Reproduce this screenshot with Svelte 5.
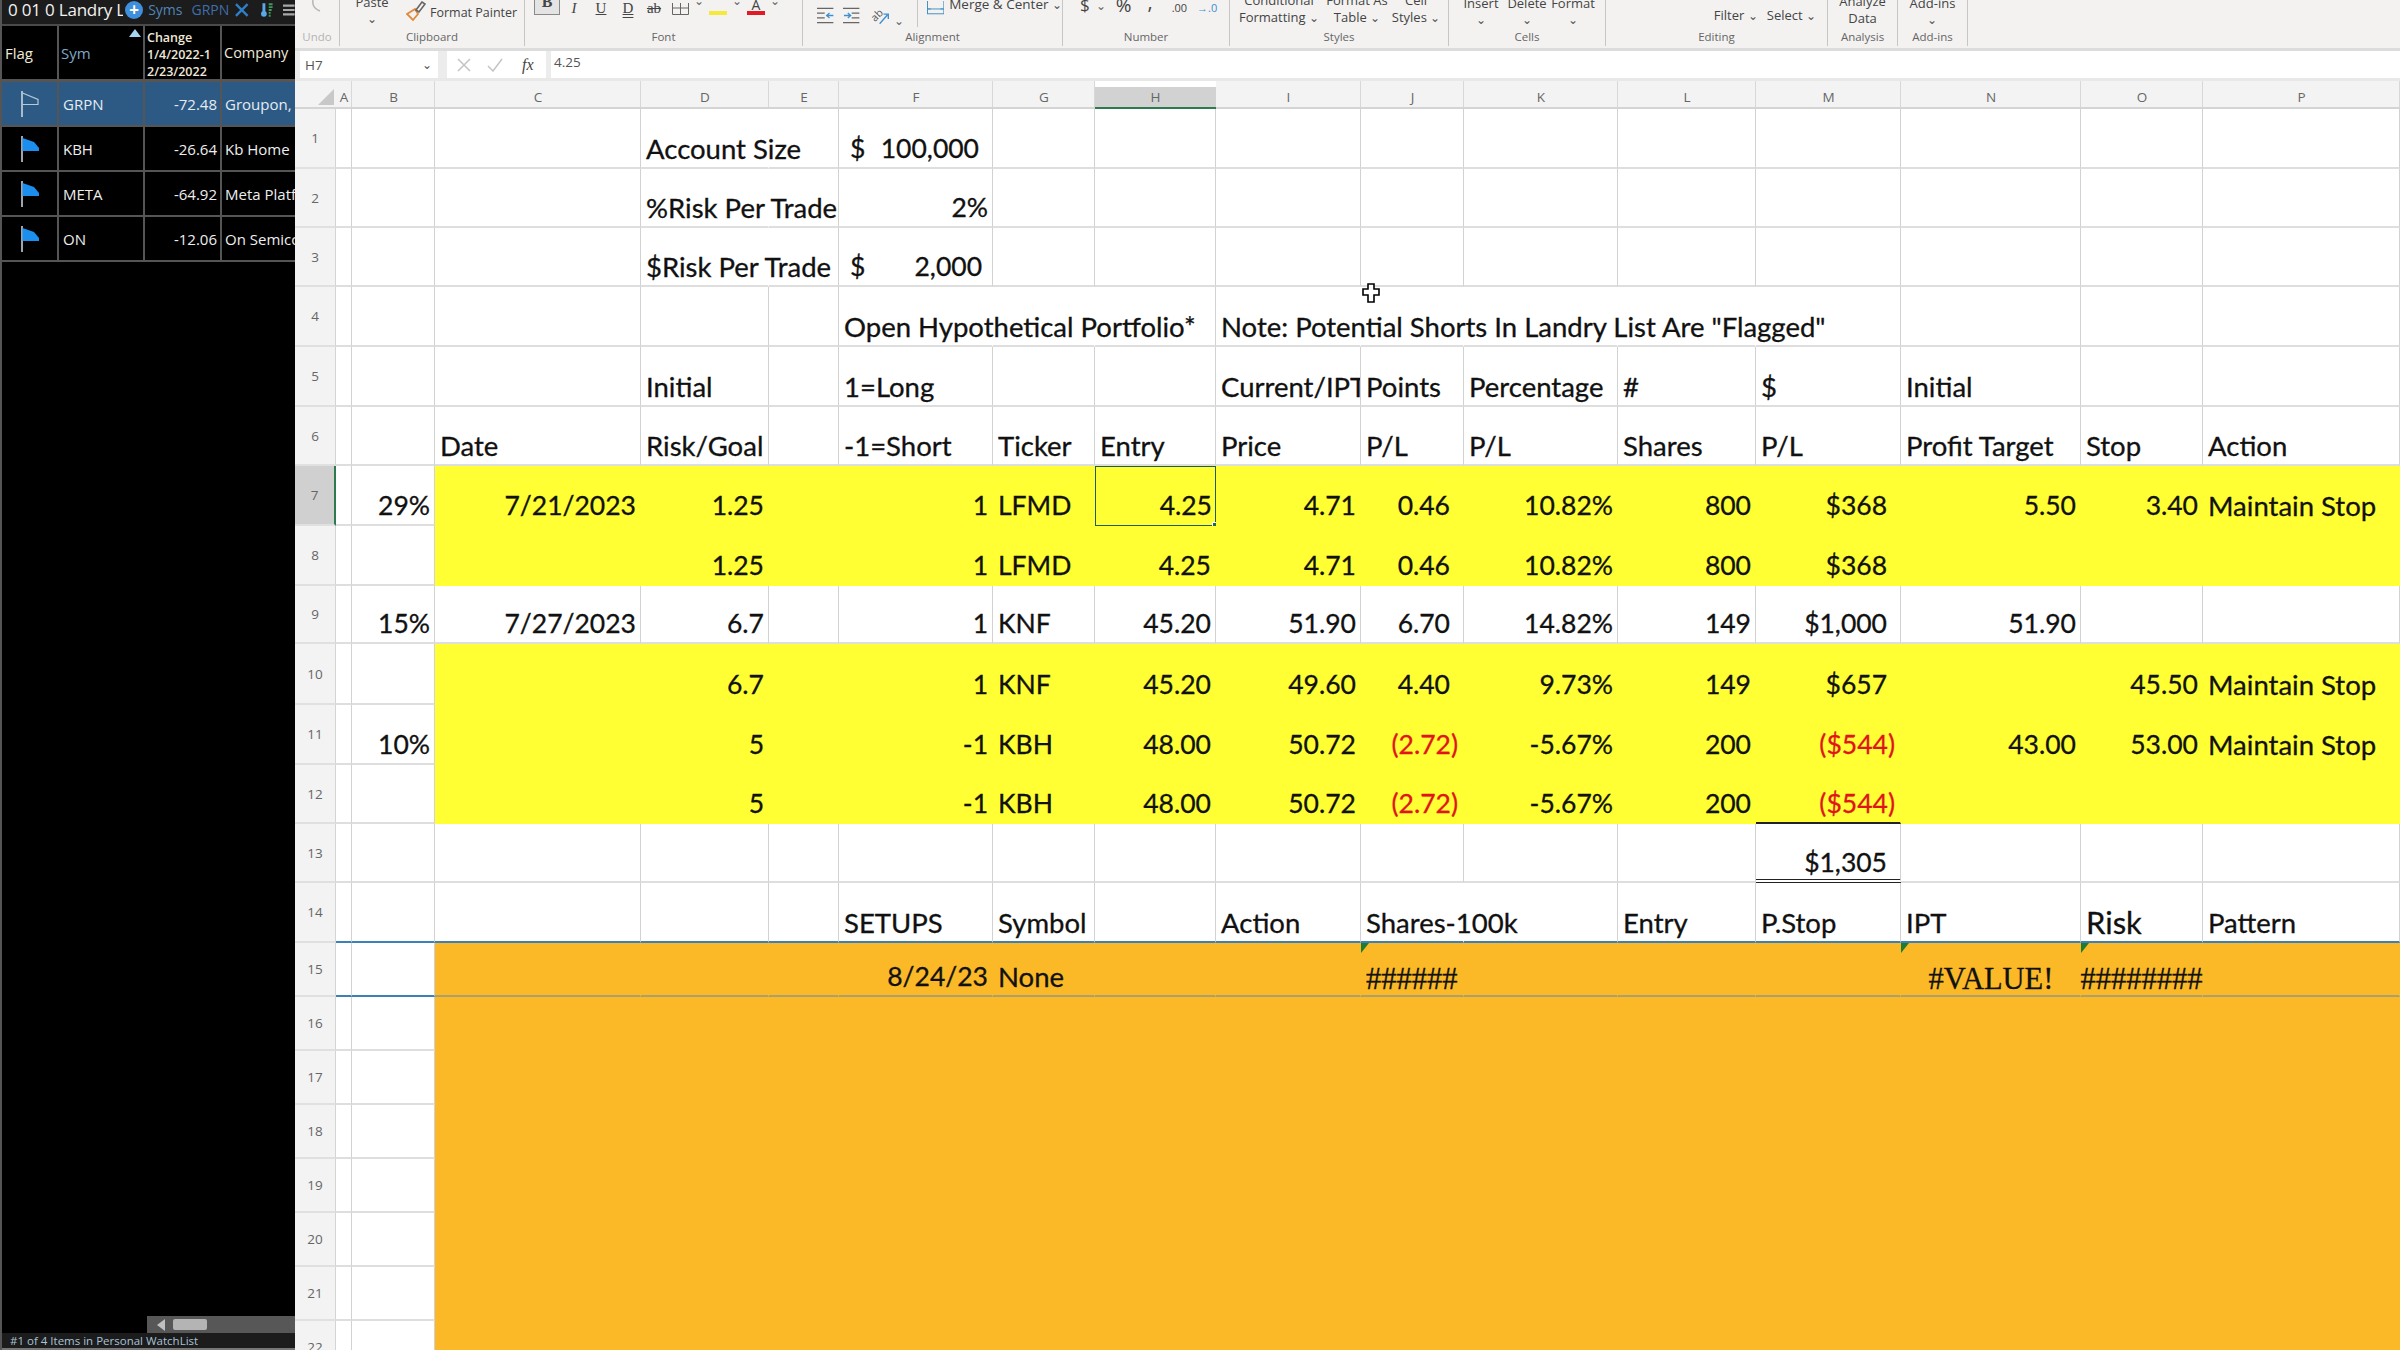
<script lang="ts">
  const letters = ["A","B","C","D","E","F","G","H","I","J","K","L","M","N","O","P"];

  const L = (t: string) => ({ t });
  const R = (t: string) => ({ t, r: true });
  const C = (t: string) => ({ t, num: true });
  const Red = (t: string) => ({ t, r: true, red: true });

  const maintain = L("Maintain Stop");
  const lfmd = { D: R("1.25"), F: R("1"), G: C("LFMD"), H: R("4.25"), I: R("4.71"), J: R("0.46"), K: R("10.82%"), L: R("800"), M: R("$368") };
  const kbh = { D: R("5"), F: R("-1"), G: C("KBH"), H: R("48.00"), I: R("50.72"), J: Red("(2.72)"), K: R("-5.67%"), L: R("200"), M: Red("($544)") };

  type Row = { n: number; fill?: string; open?: string[]; cells?: Record<string, any> };

  const rows: Row[] = [
    { n: 1, open: ["D"], cells: { D: L("Account Size"), F: { t: "100,000", acct: "a1" } } },
    { n: 2, open: ["D"], cells: { D: L("%Risk Per Trade"), F: R("2%") } },
    { n: 3, open: ["D"], cells: { D: L("$Risk Per Trade"), F: { t: "2,000", acct: "a2" } } },
    { n: 4, open: ["F","G","I","J","K","L"], cells: { F: L("Open Hypothetical Portfolio*"), I: L('Note: Potential Shorts In Landry List Are "Flagged"') } },
    { n: 5, cells: { D: L("Initial"), F: L("1=Long"), I: { t: "Current/IPT", clip: true }, J: L("Points"), K: L("Percentage"), L: L("#"), M: L("$"), N: L("Initial") } },
    { n: 6, cells: { C: L("Date"), D: L("Risk/Goal"), F: L("-1=Short"), G: L("Ticker"), H: L("Entry"), I: L("Price"), J: L("P/L"), K: L("P/L"), L: L("Shares"), M: L("P/L"), N: L("Profit Target"), O: L("Stop"), P: L("Action") } },
    { n: 7, fill: "yellow", cells: { B: R("29%"), C: R("7/21/2023"), ...lfmd, N: R("5.50"), O: R("3.40"), P: maintain } },
    { n: 8, fill: "yellow", cells: lfmd },
    { n: 9, cells: { B: R("15%"), C: R("7/27/2023"), D: R("6.7"), F: R("1"), G: C("KNF"), H: R("45.20"), I: R("51.90"), J: R("6.70"), K: R("14.82%"), L: R("149"), M: R("$1,000"), N: R("51.90") } },
    { n: 10, fill: "yellow", cells: { D: R("6.7"), F: R("1"), G: C("KNF"), H: R("45.20"), I: R("49.60"), J: R("4.40"), K: R("9.73%"), L: R("149"), M: R("$657"), O: R("45.50"), P: maintain } },
    { n: 11, fill: "yellow", cells: { B: R("10%"), ...kbh, N: R("43.00"), O: R("53.00"), P: maintain } },
    { n: 12, fill: "yellow", cells: kbh },
    { n: 13, cells: { M: R("$1,305") } },
    { n: 14, open: ["J"], cells: { F: L("SETUPS"), G: L("Symbol"), I: L("Action"), J: L("Shares-100k"), L: L("Entry"), M: L("P.Stop"), N: L("IPT"), O: { t: "Risk", big: true }, P: L("Pattern") } },
    { n: 15, fill: "orange", cells: { F: R("8/24/23"), G: L("None"), J: { t: "######", serif: true, note: true }, N: { t: "#VALUE!", serif: true, center: true, note: true }, O: { t: "########", serif: true, center: true, note: true } } },
    { n: 16, fill: "orange" },
    { n: 17, fill: "orange" },
    { n: 18, fill: "orange" },
    { n: 19, fill: "orange" },
    { n: 20, fill: "orange" },
    { n: 21, fill: "orange" },
    { n: 22, fill: "orange" },
  ];

  const watch = [
    { sym: "GRPN", chg: "-72.48", co: "Groupon, Inc", sel: true },
    { sym: "KBH", chg: "-26.64", co: "Kb Home" },
    { sym: "META", chg: "-64.92", co: "Meta Platforms" },
    { sym: "ON", chg: "-12.06", co: "On Semiconductor" },
  ];

  function filled(row: Row, col: string) {
    return row.fill && col !== "A" && col !== "B" ? row.fill : "";
  }
</script>

<div class="screen">
  <aside class="panel">
    <div class="titlebar">
      <span class="title">0 01 0 Landry L</span>
      <span class="plus">+</span>
      <span class="link syms">Syms</span>
      <span class="link grpn">GRPN</span>
      <svg class="tb-x" width="14" height="14" viewBox="0 0 14 14"><path d="M1 1 13 13M13 1 1 13" stroke="#2f7fc8" stroke-width="2.4" fill="none" /></svg>
      <svg class="tb-bars" width="13" height="16" viewBox="0 0 13 16">
        <path d="M3 1v9" stroke="#5aa8e8" stroke-width="3" />
        <circle cx="3" cy="12" r="3" fill="#5aa8e8" />
        <path d="M8 2h4M8 5h4M8 8h3M8 11h2M8 14h2" stroke="#3f9a5a" stroke-width="2" />
      </svg>
      <svg class="tb-menu" width="12" height="12" viewBox="0 0 12 12"><path d="M0 1.5h12M0 6h12M0 10.5h12" stroke="#a8a8a8" stroke-width="2.2" /></svg>
    </div>

    <div class="watch">
      <div class="wh">Flag</div>
      <div class="wh wsym">Sym<span class="sort"></span></div>
      <div class="wh wchange">Change<br />1/4/2022-1<br />2/23/2022</div>
      <div class="wh wco">Company</div>
      {#each watch as w}
        <div class="wc" class:sel={w.sel}>
          <svg width="20" height="28" viewBox="0 0 20 28">
            <path d="M2 1v26" stroke="#d5dde4" stroke-width="1.5" />
            {#if w.sel}
              <path d="M2.5 3 18 9.5v5H2.5" fill="none" stroke="#b8c8d6" stroke-width="1.2" />
            {:else}
              <path d="M2.5 3 14 7l5 6v3H2.5z" fill="#1c8fee" />
            {/if}
          </svg>
        </div>
        <div class="wc wtext" class:sel={w.sel}>{w.sym}</div>
        <div class="wc wnum" class:sel={w.sel}>{w.chg}</div>
        <div class="wc wtext wclip" class:sel={w.sel}>{w.co}</div>
      {/each}
    </div>

    <div class="panel-fill"></div>

    <div class="hscroll">
      <span class="arrow"></span>
      <span class="thumb"></span>
    </div>
    <div class="status">#1 of 4 Items in Personal WatchList</div>
  </aside>

  <main class="excel">
    <div class="ribbon">
      <section class="grp g-undo">
        <div class="tools">
          <svg width="22" height="14" viewBox="0 0 22 14"><path d="M6 0c-1 5 2 9 7 11" fill="none" stroke="#b5b5b5" stroke-width="1.5" /></svg>
        </div>
        <div class="glabel muted">Undo</div>
      </section>
      <section class="grp g-clip">
        <div class="tools">
          <div class="stack paste"><span>Paste</span><span class="chev">⌄</span></div>
          <svg class="painter" width="20" height="20" viewBox="0 0 20 20">
            <path d="M1 13 9 8l3 5-5 6z" fill="none" stroke="#e08a3c" stroke-width="1.8" />
            <path d="M10 9 16 1l3 2-6 8z" fill="none" stroke="#666" stroke-width="1.6" />
          </svg>
          <span class="tl painter-t">Format Painter</span>
        </div>
        <div class="glabel">Clipboard</div>
      </section>
      <section class="grp g-font">
        <div class="tools">
          <span class="fbtn bold">B</span>
          <span class="fg i">I</span>
          <span class="fg u">U</span>
          <span class="fg u dbl">D</span>
          <span class="fg strike">ab</span>
          <svg class="borders" width="17" height="12" viewBox="0 0 17 12"><path d="M.5 0v11.5h16V0M8.500 0v11.500M.5 5h16" fill="none" stroke="#666" /></svg>
          <span class="tiny-chev">⌄</span>
          <span class="swatch yellow-bar"></span>
          <span class="tiny-chev">⌄</span>
          <span class="swatch red-bar"><b>A</b></span>
          <span class="tiny-chev">⌄</span>
        </div>
        <div class="glabel">Font</div>
      </section>
      <section class="grp g-align">
        <div class="tools">
          <svg width="18" height="17" viewBox="0 0 18 17"><path d="M0 1h17M0 6h8M0 11h8M0 16h17" stroke="#666" stroke-width="1.3" /><path d="M17 8.500h-6M13 6l-3 2.500 3 2.500" fill="none" stroke="#3f8fd0" stroke-width="1.3" /></svg>
          <svg width="18" height="17" viewBox="0 0 18 17"><path d="M0 1h17M9 6h8M9 11h8M0 16h17" stroke="#666" stroke-width="1.3" /><path d="M1 8.500h6M5 6l3 2.500-3 2.500" fill="none" stroke="#3f8fd0" stroke-width="1.3" /></svg>
          <svg width="22" height="19" viewBox="0 0 22 19">
            <text x="1" y="13" transform="rotate(-45 6 9)" font-size="11" font-family="Open Sans, sans-serif" fill="#555">ab</text>
            <path d="M10 17l8-9M14 7h5v5" fill="none" stroke="#3f8fd0" stroke-width="1.4" />
          </svg>
          <span class="tiny-chev">⌄</span>
          <span class="vsep"></span>
          <svg class="merge" width="18" height="14" viewBox="0 0 18 14"><rect x=".5" y="-4" width="17" height="17" fill="none" stroke="#3f8fc0" /><path d="M0 8h18M4 8l-3 0M14 8h3" stroke="#3f8fc0" /></svg>
          <span class="tl merge-t">Merge &amp; Center <span class="chev">⌄</span></span>
        </div>
        <div class="glabel">Alignment</div>
      </section>
      <section class="grp g-num">
        <div class="tools">
          <span class="nm dollar">$</span>
          <span class="tiny-chev">⌄</span>
          <span class="nm pct">%</span>
          <span class="nm comma">,</span>
          <span class="nm dec">.00</span>
          <span class="nm dec blue">→.0</span>
        </div>
        <div class="glabel">Number</div>
      </section>
      <section class="grp g-styles">
        <div class="tools">
          <div class="stack st1"><span>Conditional</span><span>Formatting <i class="chev">⌄</i></span></div>
          <div class="stack st2"><span>Format As</span><span>Table <i class="chev">⌄</i></span></div>
          <div class="stack st3"><span>Cell</span><span>Styles <i class="chev">⌄</i></span></div>
        </div>
        <div class="glabel">Styles</div>
      </section>
      <section class="grp g-cells">
        <div class="tools">
          <div class="stack ce"><span>Insert</span><span class="chev">⌄</span></div>
          <div class="stack ce"><span>Delete</span><span class="chev">⌄</span></div>
          <div class="stack ce"><span>Format</span><span class="chev">⌄</span></div>
        </div>
        <div class="glabel">Cells</div>
      </section>
      <section class="grp g-edit">
        <div class="tools">
          <span class="tl">Filter <i class="chev">⌄</i></span>
          <span class="tl">Select <i class="chev">⌄</i></span>
        </div>
        <div class="glabel">Editing</div>
      </section>
      <section class="grp g-an">
        <div class="tools"><div class="stack"><span>Analyze</span><span>Data</span></div></div>
        <div class="glabel">Analysis</div>
      </section>
      <section class="grp g-add">
        <div class="tools"><div class="stack"><span>Add-ins</span><span class="chev">⌄</span></div></div>
        <div class="glabel">Add-ins</div>
      </section>
    </div>

    <div class="formula">
      <div class="namebox"><span>H7</span><span class="chev">⌄</span></div>
      <div class="fx">
        <svg width="16" height="14" viewBox="0 0 16 14"><path d="M2 1 14 13M14 1 2 13" stroke="#c4c4c4" stroke-width="1.5" /></svg>
        <svg width="18" height="14" viewBox="0 0 18 14"><path d="M2 8l5 5L16 1" fill="none" stroke="#c4c4c4" stroke-width="1.5" /></svg>
        <span class="fxt">fx</span>
      </div>
      <div class="input">4.25</div>
    </div>

    <div class="sheet">
      <div class="corner"><span class="tri"></span></div>
      {#each letters as c}
        <div class="colh" class:active={c === "H"}>{c}</div>
      {/each}

      {#each rows as row}
        <div class="rowh" class:active={row.n === 7}>{row.n}</div>
        {#each letters as c}
          {@const cell = row.cells?.[c]}
          <div
            class="cell col-{c} {filled(row, c)}"
            class:open={row.open?.includes(c)}
            class:right={cell?.r}
            class:num={cell?.r || cell?.num || cell?.acct}
            class:center={cell?.center}
            class:clip={cell?.clip}
            class:red={cell?.red}
            class:big={cell?.big}
            class:serif={cell?.serif}
            class:blue-top={row.n === 14}
            class:blue-bot={row.n === 15}
            class:under={row.n === 12 && c === "M"}
            class:total={row.n === 13 && c === "M"}
            class:selected={row.n === 7 && c === "H"}
          >
            {#if cell?.note}<span class="note"></span>{/if}
            {#if cell?.acct}
              <span class="acct {cell.acct}"><span>$</span><span>{cell.t}</span></span>
            {:else if cell}
              {cell.t}
            {/if}
            {#if row.n === 7 && c === "H"}<span class="handle"></span>{/if}
          </div>
        {/each}
      {/each}
    </div>
  </main>

  <svg class="cursor" width="18" height="20" viewBox="0 0 18 20">
    <path d="M6 1h6v5h5v6h-5v7H6v-7H1V6h5z" fill="#fff" stroke="#000" stroke-width="1.6" />
  </svg>
</div>

<style>
  :global(body) {
    margin: 0;
    background: #fff;
  }

  .screen {
    position: relative;
    display: flex;
    width: 2400px;
    height: 1350px;
    overflow: hidden;
    font-family: "Open Sans", sans-serif;
  }

  /* left watchlist */
  .panel {
    flex: none;
    display: flex;
    flex-direction: column;
    width: 293px;
    border-left: 2px solid #555;
    background: #000;
    color: #e8e8e8;
    overflow: hidden;
  }

  .titlebar {
    position: relative;
    flex: none;
    display: flex;
    align-items: center;
    height: 26px;
    padding: 0 0 5px 6px;
    box-sizing: border-box;
    background: #1c1c1c;
    border-bottom: 2px solid #4a4a4a;
    white-space: nowrap;
  }

  .title {
    width: 119px;
    margin-right: 2px;
    overflow: hidden;
    font-size: 17px;
    letter-spacing: -0.2px;
    color: #f2f2f2;
  }

  .plus {
    flex: none;
    width: 18px;
    height: 18px;
    border-radius: 50%;
    background: #3f8fdc;
    color: #fff;
    font-size: 17px;
    font-weight: 700;
    line-height: 17px;
    text-align: center;
  }

  .link {
    font-size: 14px;
    color: #4f86b8;
  }

  .syms { margin-left: 5px; }
  .grpn { margin-left: 9px; color: #3f6fa8; }
  .tb-x { margin-left: 6px; }
  .tb-bars { margin-left: 12px; }
  .tb-menu { margin-left: 10px; }

  .watch {
    flex: none;
    display: grid;
    grid-template-columns: 57px 86px 77px 73px;
    grid-template-rows: 56px repeat(4, 45px);
  }

  .wh {
    display: flex;
    align-items: center;
    padding-left: 3px;
    border-right: 2px solid #555;
    border-bottom: 3px solid #555;
    font-size: 15px;
    color: #f0e8d8;
  }

  .wsym {
    position: relative;
    color: #7fa8c8;
    padding-left: 2px;
  }

  .sort {
    position: absolute;
    top: 3px;
    right: 2px;
    border-left: 6px solid transparent;
    border-right: 6px solid transparent;
    border-bottom: 8px solid #a5d5f2;
  }

  .wchange {
    display: block;
    padding: 3px 0 0 2px;
    font-size: 12.5px;
    font-weight: 600;
    line-height: 17px;
    white-space: nowrap;
    overflow: hidden;
  }

  .wco {
    border-right: none;
    padding-left: 2px;
    font-size: 14.5px;
    overflow: hidden;
  }

  .wc {
    display: flex;
    align-items: center;
    justify-content: center;
    border-right: 2px solid #555;
    border-bottom: 2px solid #555;
    font-size: 15px;
    color: #eee;
    white-space: nowrap;
    overflow: hidden;
  }

  .wc.sel {
    background: #2d5a85;
    color: #e4ecf3;
  }

  .wtext {
    justify-content: flex-start;
    padding-left: 4px;
  }

  .wclip {
    border-right: none;
    padding-left: 3px;
  }

  .wnum {
    justify-content: flex-end;
    padding-right: 3px;
  }

  .panel-fill {
    flex: 1;
  }

  .hscroll {
    flex: none;
    display: flex;
    align-items: center;
    height: 17px;
    margin-left: 145px;
    background: #575757;
  }

  .arrow {
    margin-left: 10px;
    border-top: 6px solid transparent;
    border-bottom: 6px solid transparent;
    border-right: 8px solid #c0c0c0;
  }

  .thumb {
    width: 34px;
    height: 11px;
    margin-left: 8px;
    border-radius: 2px;
    background: #b4b4b4;
  }

  .status {
    flex: none;
    height: 15px;
    padding-left: 8px;
    border-bottom: 2px solid #777;
    background: #1c1c1c;
    color: #a8c2d8;
    font-size: 11.500px;
    line-height: 15px;
  }

  /* excel side */
  .excel {
    flex: 1;
    display: flex;
    flex-direction: column;
    min-width: 0;
  }

  .ribbon {
    flex: none;
    display: flex;
    height: 48px;
    background: #f3f2f1;
    border-bottom: 3px solid #dcdcdc;
  }

  .grp {
    flex: none;
    display: flex;
    flex-direction: column;
    height: 46px;
    border-right: 1px solid #c8c6c4;
    overflow: hidden;
  }

  .g-undo { width: 44px; }
  .g-clip { width: 184px; }
  .g-font { width: 277px; }
  .g-align { width: 259px; }
  .g-num { width: 166px; }
  .g-styles { width: 218px; }
  .g-cells { width: 156px; }
  .g-edit { width: 221px; }
  .g-an { width: 69px; }
  .g-add { width: 69px; }

  .tools {
    flex: 1;
    min-height: 0;
    display: flex;
    align-items: flex-end;
    font-size: 13px;
    line-height: 17px;
    color: #444;
    white-space: nowrap;
  }

  .glabel {
    flex: none;
    height: 18px;
    font-size: 11.500px;
    line-height: 18px;
    text-align: center;
    color: #666;
  }

  .muted { color: #b4b4b4; }

  .stack {
    display: flex;
    flex-direction: column;
    align-items: center;
    flex: none;
  }

  .chev {
    font-style: normal;
    font-size: 12px;
    line-height: 15px;
    color: #555;
  }

  .tiny-chev {
    margin: 0 0 8px 5px;
    font-size: 12px;
    line-height: 12px;
    color: #666;
  }

  .g-undo .tools {
    align-items: flex-start;
    padding-left: 12px;
  }

  .g-clip .tools { padding-bottom: 7px; }
  .paste { margin: 0 0 -5px 12px; width: 40px; }
  .painter { margin: 0 4px 0 14px; }
  .painter-t { font-size: 12.5px; }

  .g-font .tools {
    align-items: flex-end;
    padding-left: 9px;
    padding-bottom: 13px;
  }

  .fbtn {
    width: 26px;
    height: 22px;
    border: 1px solid #8a8a8a;
    background: #e4e4e4;
    box-sizing: border-box;
    font-family: "Liberation Serif", serif;
    font-weight: 700;
    font-size: 16px;
    line-height: 15px;
    text-align: center;
  }

  .fg {
    font-family: "Liberation Serif", serif;
    font-size: 15px;
    line-height: 14px;
    text-align: center;
    width: 16px;
  }

  .i { margin-left: 6px; font-style: italic; }
  .u { margin-left: 11px; text-decoration: underline; }
  .dbl { text-decoration-style: double; }
  .strike { margin-left: 10px; text-decoration: line-through; }
  .borders { margin-left: 10px; }

  .swatch {
    display: block;
    width: 18px;
    height: 16px;
    margin-left: 5px;
    font-size: 14px;
    line-height: 11px;
    text-align: center;
    box-sizing: border-box;
  }

  .swatch b { font-weight: 400; }
  .yellow-bar { border-bottom: 4px solid #f5e93a; }
  .red-bar { border-bottom: 4px solid #e21a26; }

  .g-align .tools {
    align-items: flex-start;
    padding: 7px 0 0 14px;
    gap: 9px;
  }

  .g-align .tiny-chev { margin: 8px 0 0 -6px; }

  .vsep {
    align-self: stretch;
    width: 1px;
    margin: -7px 0 0 4px;
    background: #c8c6c4;
    height: 27px;
  }

  .merge { margin: -6px 0 0 0; }
  .merge-t { margin: -10px 0 0 -4px; line-height: 15px; font-size: 13.500px; }

  .g-num .tools {
    align-items: flex-start;
    padding-left: 17px;
    font-size: 17px;
    line-height: 14px;
  }

  .g-num .tiny-chev { margin: 0 0 0 6px; }
  .nm { margin-top: -2px; }
  .pct { margin-left: 10px; font-size: 19px; }
  .comma { margin: -5px 0 0 16px; font-size: 20px; }
  .dec { margin: 1px 0 0 19px; font-size: 11px; }
  .dec.blue { margin-left: 10px; color: #3f8fd0; }

  .g-styles .tools {
    padding-left: 11px;
    padding-bottom: 2px;
  }

  .st1 { width: 76px; }
  .st2 { width: 60px; margin-left: 10px; }
  .st3 { width: 44px; margin-left: 7px; }

  .g-cells .tools {
    justify-content: center;
    gap: 3px;
    padding-bottom: 1px;
  }

  .ce { width: 43px; }

  .g-edit .tools {
    justify-content: flex-end;
    gap: 9px;
    padding: 0 11px 4px 0;
  }

  .g-an .tools,
  .g-add .tools {
    justify-content: center;
    padding-bottom: 1px;
  }

  .formula {
    flex: none;
    display: flex;
    gap: 5px;
    height: 30px;
    background: #ececec;
    box-sizing: border-box;
    border-bottom: 3px solid #e8e8e8;
    font-size: 13.500px;
    color: #555;
  }

  .namebox {
    display: flex;
    align-items: center;
    justify-content: space-between;
    width: 138px;
    margin-left: 5px;
    padding: 0 6px 0 5px;
    box-sizing: border-box;
    background: #fff;
  }

  .fx {
    display: flex;
    align-items: center;
    gap: 14px;
    width: 99px;
    margin-left: 4px;
    padding-left: 9px;
    box-sizing: border-box;
    background: #fff;
  }

  .fxt {
    margin-left: 4px;
    font-family: "Liberation Serif", serif;
    font-style: italic;
    font-size: 16px;
    color: #444;
  }

  .input {
    flex: 1;
    padding: 2px 0 0 3px;
    background: #fff;
  }

  .sheet {
    flex: 1;
    min-height: 0;
    display: grid;
    grid-template-columns: 41px 16px 83px 206px 128px 70px 154px 102px 121px 145px 103px 154px 138px 145px 180px 122px 197px;
    grid-template-rows: 28px 60px 59px 59px 60px 60px 59px 60px 60px 58px 61px 60px 59px 59px 60px 54px 54px 54px 54px 54px 54px 54px 54px;
    overflow: hidden;
    background: #fff;
    font-family: Lato, "Open Sans", sans-serif;
    font-size: 27.5px;
    color: #111;
  }

  .corner {
    display: flex;
    align-items: flex-end;
    justify-content: flex-end;
    background: #f3f3f3;
    border-bottom: 2px solid #d4d4d4;
    padding: 0 2px 2px 0;
  }

  .tri {
    border-left: 16px solid transparent;
    border-bottom: 16px solid #c8c8c8;
  }

  .colh {
    display: flex;
    align-items: center;
    justify-content: center;
    padding-top: 6px;
    box-sizing: border-box;
    background: #f3f3f3;
    border-bottom: 2px solid #d4d4d4;
    box-shadow: inset -1px 0 0 #d8d8d8;
    font-family: "Open Sans", sans-serif;
    font-size: 13.500px;
    color: #666;
  }

  .colh.active {
    background: #d2d2d2;
    border-bottom-color: #2d7a4e;
    box-shadow: none;
    margin-top: 6px;
    padding-top: 0;
  }

  .rowh {
    display: flex;
    align-items: center;
    justify-content: center;
    box-sizing: border-box;
    background: #f3f3f3;
    border-right: 1px solid #d4d4d4;
    border-bottom: 2px solid #e0e0e0;
    font-family: "Open Sans", sans-serif;
    font-size: 13.500px;
    color: #666;
  }

  .rowh.active {
    background: #d0d0d0;
    border-right: 2px solid #2d7a4e;
  }

  .cell {
    position: relative;
    display: flex;
    align-items: flex-end;
    box-sizing: border-box;
    min-width: 0;
    padding: 0 4px 4px 5px;
    line-height: 29px;
    white-space: nowrap;
    -webkit-text-stroke: 0.3px currentColor;
    border-right: 1px solid #d2d2d2;
    border-bottom: 2px solid #dedede;
  }

  .cell.num { font-size: 26.5px; }
  .cell.open { border-right-color: transparent; }
  .cell.right { justify-content: flex-end; }
  .cell.center { justify-content: center; }
  .cell.clip { overflow: hidden; }
  .cell.red { color: #e0141c; }
  .cell.big { font-size: 31px; }

  .cell.serif {
    font-family: "Liberation Serif", serif;
    font-size: 30.5px;
    padding-bottom: 1px;
  }

  .cell.col-O.serif { padding: 0 0 1px; }
  .col-J.right, .col-M.right { padding-right: 13px; }
  .col-J.red, .col-M.red { padding-right: 5px; }

  .yellow {
    background: #ffff33;
    border-color: #ffff33;
  }

  .orange {
    background: #fcb927;
    border-color: #fcb927;
  }

  .cell.blue-top { border-bottom: 2px solid #3d80b8; }
  .cell.blue-bot { border-bottom: 2px solid #3d80b8; }
  .cell.blue-bot.orange { border-bottom: 2px solid #a8a070; }
  .cell.under { border-bottom: 2px solid #222; }

  .cell.total {
    border-bottom: 4px double #222;
    padding-bottom: 2px;
  }

  .cell.selected {
    border: 1px solid #1f5f4a;
    padding: 0 3px 5px 5px;
  }

  .handle {
    position: absolute;
    right: -3px;
    bottom: -3px;
    width: 4px;
    height: 4px;
    background: #1f6e43;
    border: 1px solid #fff;
  }

  .note {
    position: absolute;
    top: 0;
    left: 0;
    border-top: 10px solid #1f7a32;
    border-right: 8px solid transparent;
  }

  .acct {
    display: flex;
    justify-content: space-between;
    width: 100%;
    padding-left: 6px;
  }

  .a1 { padding-right: 9px; }
  .a2 { padding-right: 6px; }

  .cursor {
    position: absolute;
    left: 1362px;
    top: 283px;
  }
</style>
